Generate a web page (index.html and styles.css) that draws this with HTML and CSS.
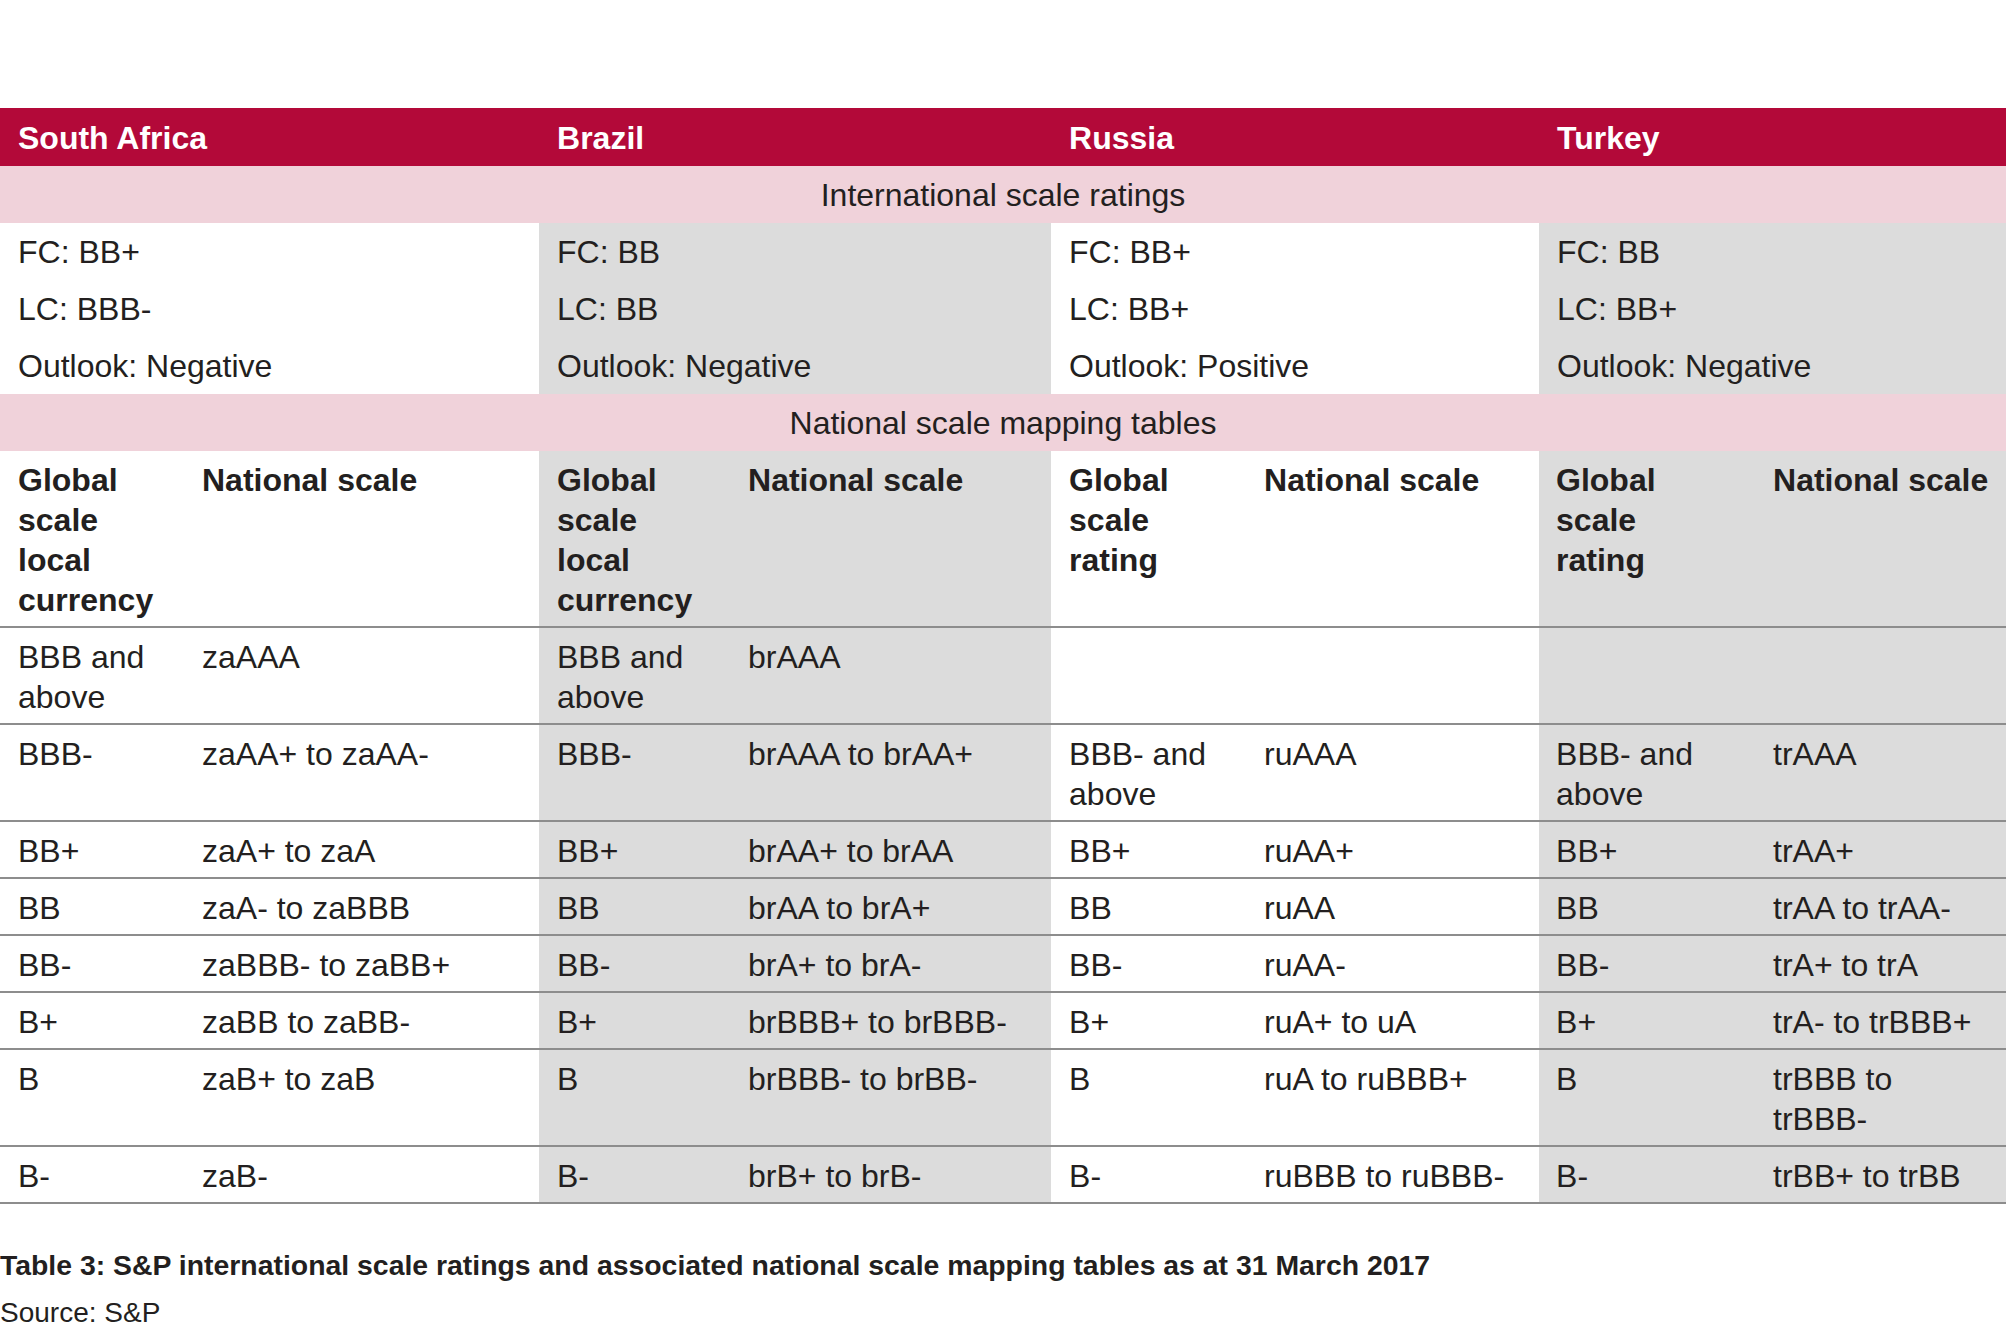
FILE: index.html
```html
<!DOCTYPE html>
<html lang="en">
<head>
<meta charset="utf-8">
<title>S&amp;P scale ratings</title>
<link rel="stylesheet" href="styles.css">
</head>
<body>
<main class="page">
  <table class="ratings">
    <colgroup>
      <col class="c-sa1"><col class="c-sa2">
      <col class="c-br1"><col class="c-br2">
      <col class="c-ru1"><col class="c-ru2">
      <col class="c-tr1"><col class="c-tr2">
    </colgroup>
    <thead>
      <tr class="country-row">
        <th colspan="2">South Africa</th>
        <th colspan="2">Brazil</th>
        <th colspan="2">Russia</th>
        <th colspan="2">Turkey</th>
      </tr>
    </thead>
    <tbody>
      <tr class="band-row"><td colspan="8">International scale ratings</td></tr>
      <tr class="rate-row">
        <td colspan="2">FC: BB+</td>
        <td colspan="2" class="alt">FC: BB</td>
        <td colspan="2">FC: BB+</td>
        <td colspan="2" class="alt">FC: BB</td>
      </tr>
      <tr class="rate-row">
        <td colspan="2">LC: BBB-</td>
        <td colspan="2" class="alt">LC: BB</td>
        <td colspan="2">LC: BB+</td>
        <td colspan="2" class="alt">LC: BB+</td>
      </tr>
      <tr class="rate-row">
        <td colspan="2">Outlook: Negative</td>
        <td colspan="2" class="alt">Outlook: Negative</td>
        <td colspan="2">Outlook: Positive</td>
        <td colspan="2" class="alt">Outlook: Negative</td>
      </tr>
      <tr class="band-row"><td colspan="8">National scale mapping tables</td></tr>
      <tr class="map-row map-head">
        <td>Global scale local currency</td><td>National scale</td>
        <td class="alt">Global scale local currency</td><td class="alt">National scale</td>
        <td>Global scale rating</td><td>National scale</td>
        <td class="alt tr-global">Global scale rating</td><td class="alt last">National scale</td>
      </tr>
      <tr class="map-row">
        <td>BBB and above</td><td>zaAAA</td>
        <td class="alt">BBB and above</td><td class="alt">brAAA</td>
        <td></td><td></td>
        <td class="alt tr-global"></td><td class="alt last"></td>
      </tr>
      <tr class="map-row">
        <td>BBB-</td><td>zaAA+ to zaAA-</td>
        <td class="alt">BBB-</td><td class="alt">brAAA to brAA+</td>
        <td>BBB- and above</td><td>ruAAA</td>
        <td class="alt tr-global">BBB- and above</td><td class="alt last">trAAA</td>
      </tr>
      <tr class="map-row">
        <td>BB+</td><td>zaA+ to zaA</td>
        <td class="alt">BB+</td><td class="alt">brAA+ to brAA</td>
        <td>BB+</td><td>ruAA+</td>
        <td class="alt tr-global">BB+</td><td class="alt last">trAA+</td>
      </tr>
      <tr class="map-row">
        <td>BB</td><td>zaA- to zaBBB</td>
        <td class="alt">BB</td><td class="alt">brAA to brA+</td>
        <td>BB</td><td>ruAA</td>
        <td class="alt tr-global">BB</td><td class="alt last">trAA to trAA-</td>
      </tr>
      <tr class="map-row">
        <td>BB-</td><td>zaBBB- to zaBB+</td>
        <td class="alt">BB-</td><td class="alt">brA+ to brA-</td>
        <td>BB-</td><td>ruAA-</td>
        <td class="alt tr-global">BB-</td><td class="alt last">trA+ to trA</td>
      </tr>
      <tr class="map-row">
        <td>B+</td><td>zaBB to zaBB-</td>
        <td class="alt">B+</td><td class="alt">brBBB+ to brBBB-</td>
        <td>B+</td><td>ruA+ to uA</td>
        <td class="alt tr-global">B+</td><td class="alt last">trA- to trBBB+</td>
      </tr>
      <tr class="map-row">
        <td>B</td><td>zaB+ to zaB</td>
        <td class="alt">B</td><td class="alt">brBBB- to brBB-</td>
        <td>B</td><td>ruA to ruBBB+</td>
        <td class="alt tr-global">B</td><td class="alt last">trBBB to trBBB-</td>
      </tr>
      <tr class="map-row">
        <td>B-</td><td>zaB-</td>
        <td class="alt">B-</td><td class="alt">brB+ to brB-</td>
        <td>B-</td><td>ruBBB to ruBBB-</td>
        <td class="alt tr-global">B-</td><td class="alt last">trBB+ to trBB</td>
      </tr>
    </tbody>
  </table>
  <p class="caption">Table 3: S&amp;P international scale ratings and associated national scale mapping tables as at 31 March 2017</p>
  <p class="source">Source: S&amp;P</p>
</main>
</body>
</html>
```

FILE: styles.css
```css
html, body {
  margin: 0;
  padding: 0;
  background: #ffffff;
}

body {
  font-family: "Liberation Sans", Arial, sans-serif;
  color: #231f20;
}

.page {
  padding-top: 108px;
  width: 2006px;
}

.ratings {
  width: 2006px;
  table-layout: fixed;
  border-collapse: separate;
  border-spacing: 0;
  font-size: 32px;
  line-height: 40px;
}

.c-sa1 { width: 184px; }
.c-sa2 { width: 355px; }
.c-br1 { width: 191px; }
.c-br2 { width: 321px; }
.c-ru1 { width: 195px; }
.c-ru2 { width: 293px; }
.c-tr1 { width: 216px; }
.c-tr2 { width: 251px; }

.ratings th,
.ratings td {
  text-align: left;
  vertical-align: top;
  padding: 9px 18px 6px 18px;
}

.country-row th {
  background: #b30939;
  color: #ffffff;
  font-weight: bold;
  padding-top: 10px;
  padding-bottom: 8px;
}

.band-row td {
  background: #f0d2da;
  text-align: center;
  padding-bottom: 8px;
}

.rate-row td {
  padding-bottom: 8px;
}

.alt {
  background: #dcdcdc;
}

.map-row td {
  border-bottom: 2px solid #8d8d8d;
}

.map-head td {
  font-weight: bold;
}

.ratings td.tr-global {
  padding-left: 17px;
  padding-right: 30px;
}

.ratings td.last {
  padding-right: 14px;
}

.caption {
  margin: 43px 0 0 0;
  font-size: 28.4px;
  line-height: 36px;
  font-weight: bold;
}

.source {
  margin: 12px 0 0 0;
  font-size: 28px;
  line-height: 36px;
}
```
